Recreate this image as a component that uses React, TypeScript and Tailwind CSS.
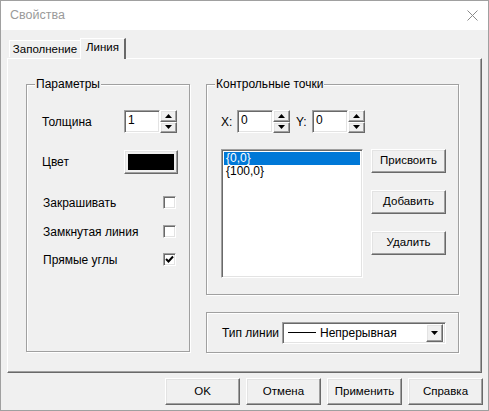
import React from 'react';

// Classic Win32 property dialog: "Свойства" → tab "Линия"

const raised =
  'bg-[#f0f0f0] border border-t-white border-l-white border-r-[#696969] border-b-[#696969] shadow-[inset_-1px_-1px_0_#a0a0a0,inset_1px_1px_0_#e3e3e3]';
const sunken =
  'bg-white border border-t-[#a0a0a0] border-l-[#a0a0a0] border-r-white border-b-white shadow-[inset_1px_1px_0_#696969,inset_-1px_-1px_0_#e3e3e3]';
const etched = 'relative border border-[#a0a0a0] shadow-[inset_1px_1px_0_#ffffff,1px_1px_0_#ffffff]';

function Arrow({ up }: { up?: boolean }) {
  return (
    <svg width="7" height="4" viewBox="0 0 7 4">
      {up ? <path d="M3.5 0 L7 4 L0 4 Z" fill="#000" /> : <path d="M0 0 L7 0 L3.5 4 Z" fill="#000" />}
    </svg>
  );
}

function Spinner({ value }: { value: string }) {
  return (
    <div className="flex h-[23px]">
      <div className={`${sunken} w-[36px] h-full pl-[3px] leading-[19px] text-[12px]`}>{value}</div>
      <div className="flex flex-col w-[17px] h-full">
        <button className={`${raised} h-[11.5px] flex items-center justify-center`}>
          <Arrow up />
        </button>
        <button className={`${raised} h-[11.5px] flex items-center justify-center`}>
          <Arrow />
        </button>
      </div>
    </div>
  );
}

function CheckBox({ checked }: { checked?: boolean }) {
  return (
    <div className={`${sunken} w-[13px] h-[13px] flex items-center justify-center`}>
      {checked && (
        <svg width="9" height="9" viewBox="0 0 9 9">
          <path d="M1 4 L3.5 6.5 L8 1.5" stroke="#000" strokeWidth="2" fill="none" />
        </svg>
      )}
    </div>
  );
}

function Group({ title, className, children }: { title: string; className: string; children: React.ReactNode }) {
  return (
    <div className={`${etched} ${className}`}>
      <span className="absolute -top-[8px] left-[8px] px-[1px] bg-[#f0f0f0] leading-[14px]">{title}</span>
      {children}
    </div>
  );
}

function Btn({ label, className }: { label: string; className: string }) {
  return <button className={`${raised} flex items-center justify-center text-[11.5px] ${className}`}>{label}</button>;
}

export default function App() {
  const checks = [
    { label: 'Закрашивать', checked: false, mt: 'mt-[23px]' },
    { label: 'Замкнутая линия', checked: false, mt: 'mt-[16px]' },
    { label: 'Прямые углы', checked: true, mt: 'mt-[15px]' },
  ];

  return (
    <div
      className="w-[489px] h-[411px] bg-[#f0f0f0] border border-[#a0a0a0] flex flex-col text-[12px] text-black"
      style={{ fontFamily: '"Liberation Sans", Arial, sans-serif' }}
    >
      {/* title bar */}
      <div className="h-[29px] bg-white flex items-center justify-between pl-[9px] pr-[10px] shrink-0">
        <span className="text-[#9a9a9a] text-[12.5px]">Свойства</span>
        <svg width="11" height="11" viewBox="0 0 11 11">
          <path d="M0.5 0.5 L10.5 10.5 M10.5 0.5 L0.5 10.5" stroke="#8a8a8a" strokeWidth="1" />
        </svg>
      </div>

      {/* tabs */}
      <div className="flex items-end mt-[7px] ml-[8px] h-[21px] relative z-10 text-[11.5px]">
        <div className="h-[17px] w-[72px] border border-b-0 border-t-white border-l-white border-r-[#a0a0a0] flex items-center justify-center leading-none mb-[1px] pt-[1px]">
          Заполнение
        </div>
        <div className="h-[21px] w-[46px] -ml-[1px] border-t border-l border-r-2 border-t-white border-l-white border-r-[#696969] bg-[#f0f0f0] flex items-start justify-center pt-[3px] leading-none -mb-[1px]">
          Линия
        </div>
      </div>

      {/* tab page */}
      <div className="ml-[6px] w-[475px] h-[315px] border border-t-white border-l-white border-r-[#696969] border-b-[#696969] shadow-[inset_-1px_-1px_0_#a0a0a0] flex items-start pl-[18px] pt-[25px] gap-[16px]">
        <Group title="Параметры" className="w-[164px] h-[268px] flex flex-col">
          <div className="mt-[25px] ml-[15px] flex items-center h-[23px]">
            <span className="w-[82px]">Толщина</span>
            <Spinner value="1" />
          </div>
          <div className="mt-[17px] ml-[15px] flex items-center h-[23px]">
            <span className="w-[82px]">Цвет</span>
            <button className={`${raised} w-[54px] h-[24px] p-[3px]`}>
              <div className="w-full h-full bg-black" />
            </button>
          </div>
          {checks.map((c) => (
            <div key={c.label} className={`${c.mt} ml-[16px] flex items-center h-[13px]`}>
              <span className="w-[120px]">{c.label}</span>
              <CheckBox checked={c.checked} />
            </div>
          ))}
        </Group>

        <div className="flex flex-col gap-[17px]">
          <Group title="Контрольные точки" className="w-[253px] h-[211px] flex flex-col">
            <div className="mt-[25px] ml-[14px] flex items-center h-[23px]">
              <span className="w-[16px]">X:</span>
              <Spinner value="0" />
              <span className="w-[16px] ml-[6px]">Y:</span>
              <Spinner value="0" />
            </div>
            <div className="mt-[16px] ml-[14px] flex items-start gap-[8px]">
              <div className={`${sunken} w-[142px] h-[129px] p-[2px] flex flex-col`}>
                <div className="h-[13px] bg-[#0078d7] text-white leading-[13px] pl-[2px]">{'{0,0}'}</div>
                <div className="h-[13px] leading-[13px] pl-[2px]">{'{100,0}'}</div>
              </div>
              <div className="flex flex-col gap-[17px]">
                <Btn label="Присвоить" className="w-[75px] h-[24px]" />
                <Btn label="Добавить" className="w-[75px] h-[24px]" />
                <Btn label="Удалить" className="w-[75px] h-[24px]" />
              </div>
            </div>
          </Group>

          <div className={`${etched} w-[253px] h-[41px] flex items-center pl-[15px]`}>
            <span className="w-[60px]">Тип линии</span>
            <div className={`${sunken} w-[164px] h-[22px] flex items-center pl-[5px] pr-[2px]`}>
              <div className="w-[28px] h-[1px] bg-black" />
              <span className="ml-[4px] flex-1">Непрерывная</span>
              <div className={`${raised} w-[17px] h-[18px] flex items-center justify-center`}>
                <Arrow />
              </div>
            </div>
          </div>
        </div>
      </div>

      {/* dialog buttons */}
      <div className="flex justify-end gap-[6px] mt-[5px] mr-[5px]">
        <Btn label="OK" className="w-[75px] h-[27px]" />
        <Btn label="Отмена" className="w-[75px] h-[27px]" />
        <Btn label="Применить" className="w-[75px] h-[27px]" />
        <Btn label="Справка" className="w-[75px] h-[27px]" />
      </div>
    </div>
  );
}
